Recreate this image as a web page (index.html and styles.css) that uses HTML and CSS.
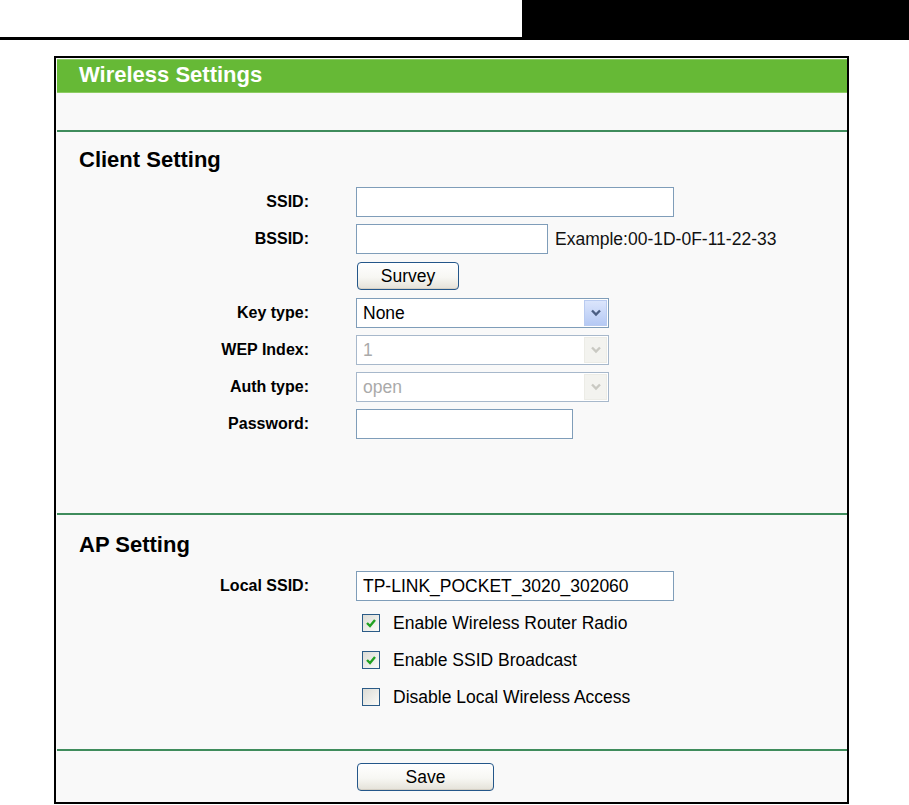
FILE: index.html
```html
<!DOCTYPE html>
<html lang="en">
<head>
<meta charset="utf-8">
<title>Wireless Settings</title>
<link rel="stylesheet" href="styles.css">
</head>
<body>
<div class="topbar"><div class="topbar-block"></div></div>
<div class="topbar-rule"></div>

<main class="panel">
  <div class="panel-title">Wireless Settings</div>
  <div class="panel-intro"></div>

  <section class="section section-client">
    <h2 class="section-heading">Client Setting</h2>
    <div class="form-grid">
      <div class="field-label">SSID:</div>
      <div class="field"><input class="input input-wide" type="text" value=""></div>

      <div class="field-label">BSSID:</div>
      <div class="field"><input class="input input-mid" type="text" value=""><span class="hint">Example:00-1D-0F-11-22-33</span></div>

      <div class="field-label"></div>
      <div class="field"><button class="btn btn-survey" type="button">Survey</button></div>

      <div class="field-label">Key type:</div>
      <div class="field">
        <div class="select">
          <span class="select-value">None</span>
          <span class="select-arrow"><svg width="12" height="8" viewBox="0 0 12 8"><path d="M2 1.5 L6 5.5 L10 1.5" fill="none" stroke="#4a5d82" stroke-width="2.4"/></svg></span>
        </div>
      </div>

      <div class="field-label">WEP Index:</div>
      <div class="field">
        <div class="select is-disabled">
          <span class="select-value">1</span>
          <span class="select-arrow"><svg width="12" height="8" viewBox="0 0 12 8"><path d="M2 1.5 L6 5.5 L10 1.5" fill="none" stroke="#c9c9c2" stroke-width="2.4"/></svg></span>
        </div>
      </div>

      <div class="field-label">Auth type:</div>
      <div class="field">
        <div class="select is-disabled">
          <span class="select-value">open</span>
          <span class="select-arrow"><svg width="12" height="8" viewBox="0 0 12 8"><path d="M2 1.5 L6 5.5 L10 1.5" fill="none" stroke="#c9c9c2" stroke-width="2.4"/></svg></span>
        </div>
      </div>

      <div class="field-label">Password:</div>
      <div class="field"><input class="input input-short" type="password" value=""></div>
    </div>
  </section>

  <section class="section section-ap">
    <h2 class="section-heading">AP Setting</h2>
    <div class="form-grid">
      <div class="field-label">Local SSID:</div>
      <div class="field"><input class="input input-wide" type="text" value="TP-LINK_POCKET_3020_302060"></div>

      <div class="field-label"></div>
      <div class="field check">
        <span class="checkbox"><svg width="12" height="12" viewBox="0 0 12 12"><path d="M2 6 L5 9 L10 3" fill="none" stroke="#21a121" stroke-width="2.4"/></svg></span>
        <span>Enable Wireless Router Radio</span>
      </div>

      <div class="field-label"></div>
      <div class="field check">
        <span class="checkbox"><svg width="12" height="12" viewBox="0 0 12 12"><path d="M2 6 L5 9 L10 3" fill="none" stroke="#21a121" stroke-width="2.4"/></svg></span>
        <span>Enable SSID Broadcast</span>
      </div>

      <div class="field-label"></div>
      <div class="field check">
        <span class="checkbox"></span>
        <span>Disable Local Wireless Access</span>
      </div>
    </div>
  </section>

  <section class="section section-actions">
    <div class="form-grid">
      <div class="field-label"></div>
      <div class="field"><button class="btn btn-save" type="button">Save</button></div>
    </div>
  </section>
</main>
</body>
</html>
```

FILE: styles.css
```css
body {
  margin: 0;
  background: #ffffff;
  font-family: "Liberation Sans", Arial, sans-serif;
  color: #000;
}

.topbar {
  height: 37px;
  display: flex;
  justify-content: flex-end;
}

.topbar-block {
  width: 387px;
  background: #000;
}

.topbar-rule {
  height: 3px;
  background: #000;
}

.panel {
  display: block;
  margin: 16px 0 0 54px;
  width: 795px;
  box-sizing: border-box;
  border: 2px solid #000;
  background: #f9f9f9;
  padding: 1px 0 11px 1px;
}

.panel-title {
  height: 34px;
  box-sizing: border-box;
  background: #66b936;
  border-top: 1px solid #8dcc62;
  border-bottom: 1px solid #8dcc62;
  color: #fff;
  font-weight: bold;
  font-size: 22px;
  line-height: 28px;
  padding: 1px 0 0 22px;
}

.panel-intro {
  height: 37px;
}

.section {
  border-top: 2px solid #3f8c5c;
}

.section-client {
  padding: 15px 0 74px;
}

.section-ap {
  padding: 17px 0 37px;
}

.section-actions {
  padding-top: 12px;
}

.section-heading {
  margin: 0;
  padding-left: 22px;
  font-size: 22px;
  line-height: 26px;
  font-weight: bold;
}

.section-client .section-heading {
  margin-bottom: 14px;
}

.section-ap .section-heading {
  margin-bottom: 13px;
}

.form-grid {
  display: grid;
  grid-template-columns: 252px 1fr;
  column-gap: 47px;
  grid-auto-rows: 30px;
  row-gap: 7px;
}

.section-actions .form-grid {
  grid-auto-rows: 28px;
}

.field-label {
  align-self: center;
  text-align: right;
  font-weight: bold;
  font-size: 16px;
  line-height: 18px;
}

.field {
  display: flex;
  align-items: center;
  font-size: 17.5px;
}

.input {
  box-sizing: border-box;
  height: 30px;
  margin: 0;
  border: 1px solid #7f9db9;
  border-radius: 0;
  background: #fff;
  padding: 0 6px;
  font-family: "Liberation Sans", Arial, sans-serif;
  font-size: 17.5px;
  color: #000;
  outline: none;
}

.input-wide { width: 318px; }
.input-mid { width: 192px; }
.input-short { width: 217px; }

.hint {
  margin-left: 7px;
  color: #111;
}

.btn {
  box-sizing: border-box;
  height: 28px;
  margin: 0 0 0 1px;
  padding: 0;
  border: 1px solid #24578a;
  border-radius: 4px;
  background: linear-gradient(#ffffff 0%, #f7f7f3 55%, #e4e1d8 100%);
  box-shadow: inset 0 -1px 0 #d4cfc4, inset 0 1px 0 #ffffff;
  font-family: "Liberation Sans", Arial, sans-serif;
  font-size: 17.5px;
  color: #000;
}

.btn-survey { width: 102px; }
.btn-save { width: 137px; }

.select {
  display: flex;
  box-sizing: border-box;
  width: 253px;
  height: 30px;
  border: 1px solid #7f9db9;
  background: #fff;
}

.select-value {
  flex: 1;
  padding-left: 6px;
  line-height: 28px;
  font-size: 17.5px;
}

.select-arrow {
  width: 23px;
  margin: 1px;
  box-sizing: border-box;
  border: 1px solid #b9cbf0;
  background: linear-gradient(#dbe5fc, #b5c9f4);
  display: flex;
  align-items: center;
  justify-content: center;
}

.select.is-disabled {
  border-color: #a7b8cb;
}

.select.is-disabled .select-value {
  color: #aaaaaa;
}

.select.is-disabled .select-arrow {
  border-color: #ecece6;
  background: #f3f3ef;
}

.check {
  padding-left: 6px;
  gap: 13px;
}

.checkbox {
  width: 18px;
  height: 18px;
  box-sizing: border-box;
  border: 1px solid #2b5b87;
  background: linear-gradient(135deg, #dcdcd6, #fbfbf8);
  display: flex;
  align-items: center;
  justify-content: center;
}
```
